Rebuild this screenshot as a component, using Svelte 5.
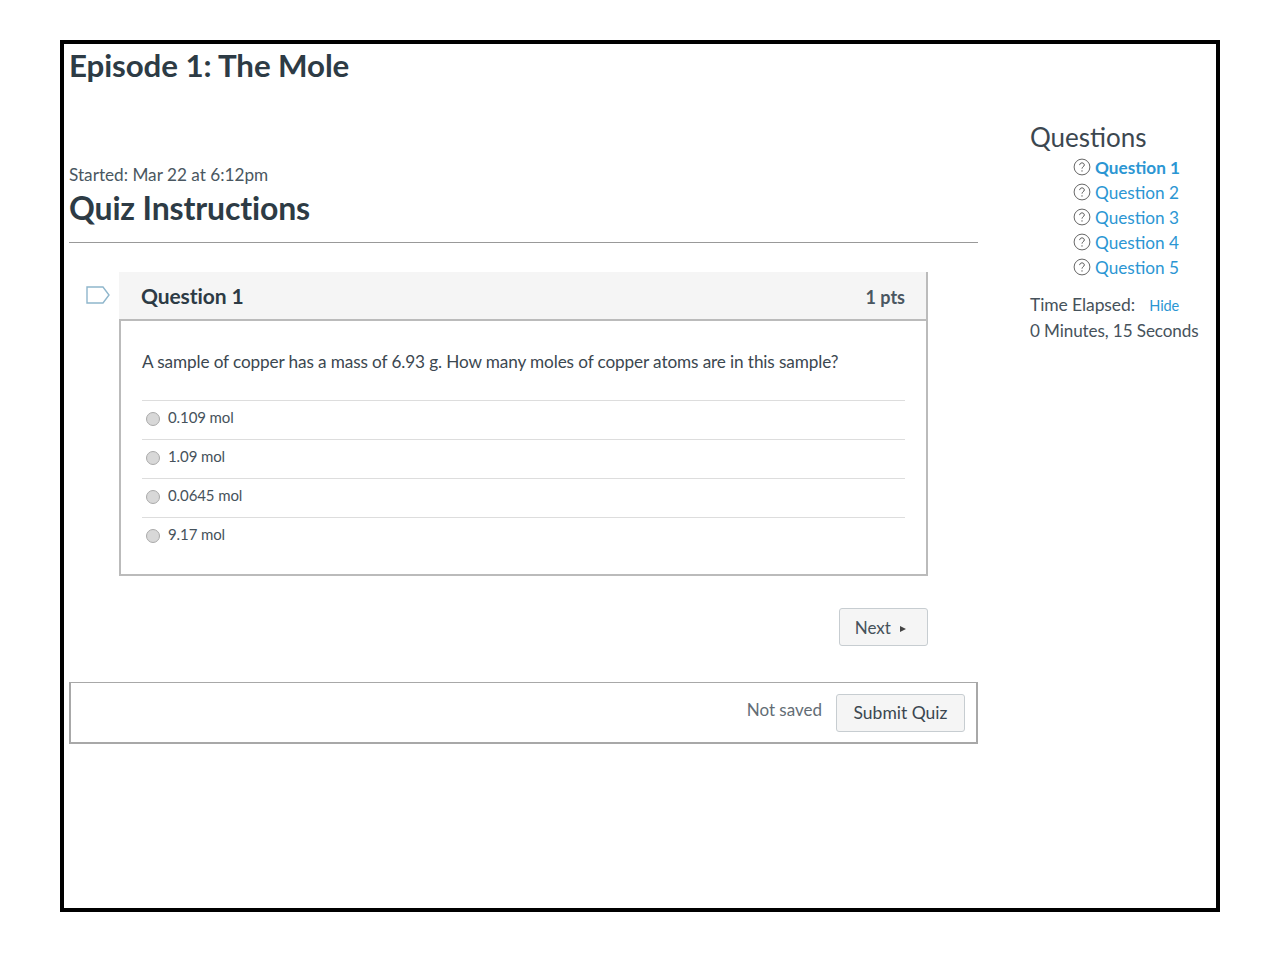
<script>
  const answers = ['0.109 mol', '1.09 mol', '0.0645 mol', '9.17 mol'];
  const questions = [1, 2, 3, 4, 5];
</script>

<div class="frame">
  <main class="main">
    <h1>Episode 1: The Mole</h1>
    <p class="started">Started: Mar 22 at 6:12pm</p>
    <h2>Quiz Instructions</h2>
    <hr />

    <div class="question-wrap">
      <svg class="flag" width="24" height="18" viewBox="0 0 24 18" fill="none">
        <path d="M1 1h16l6 8-6 8H1z" stroke="#8fb6cc" stroke-width="1.4" />
      </svg>
      <div class="question">
        <div class="q-head">
          <span class="q-title">Question 1</span>
          <span class="q-pts">1 pts</span>
        </div>
        <div class="q-body">
          <p class="q-text">A sample of copper has a mass of 6.93 g. How many moles of copper atoms are in this sample?</p>
          <ul class="answers">
            {#each answers as a}
              <li><span class="radio"></span><span>{a}</span></li>
            {/each}
          </ul>
        </div>
      </div>
    </div>

    <div class="next-row">
      <button class="btn next">Next <span class="arrow"></span></button>
    </div>

    <div class="submit-bar">
      <span class="saved">Not saved</span>
      <button class="btn submit">Submit Quiz</button>
    </div>
  </main>

  <aside class="side">
    <h3>Questions</h3>
    <ul class="q-list">
      {#each questions as n}
        <li>
          <svg width="18" height="18" viewBox="0 0 18 18" fill="none">
            <circle cx="9" cy="9" r="7.9" stroke="#555" stroke-width="0.9" />
            <path d="M6.7 7.1c0-1.4 1-2.2 2.3-2.2s2.3.8 2.3 2c0 1.9-2.3 1.9-2.3 3.7" stroke="#555" stroke-width="1" />
            <circle cx="9" cy="12.9" r="0.7" fill="#555" />
          </svg>
          <a href="#q{n}" class:current={n === 1}>Question {n}</a>
        </li>
      {/each}
    </ul>
    <div class="time">
      <div class="time-label">Time Elapsed: <a href="#hide">Hide</a></div>
      <div class="time-val">0 Minutes, 15 Seconds</div>
    </div>
  </aside>
</div>

<style>
  :global(body) {
    background: #fff;
  }
  .frame {
    box-sizing: border-box;
    width: 1160px;
    height: 872px;
    margin: 40px 0 0 60px;
    border: 4px solid #000;
    padding-left: 5px;
    display: flex;
    font-family: Lato, 'Open Sans', sans-serif;
    color: #2d3b45;
  }
  .main {
    width: 909px;
    flex: none;
  }
  h1 {
    margin: 0;
    padding-top: 1px;
    font-size: 31.3px;
    line-height: 41px;
    font-weight: 700;
    letter-spacing: -0.1px;
  }
  .started {
    margin: 76px 0 0;
    font-size: 17.2px;
    line-height: 26px;
    color: #4a5761;
  }
  h2 {
    margin: -1px 0 0;
    font-size: 32px;
    line-height: 41px;
    font-weight: 700;
    letter-spacing: -0.15px;
  }
  hr {
    margin: 14px 0 0;
    border: 0;
    height: 1px;
    background: #999;
  }
  .question-wrap {
    position: relative;
    margin: 29px 0 0 50px;
    width: 809px;
  }
  .flag {
    position: absolute;
    left: -33.5px;
    top: 14px;
  }
  .q-head {
    box-sizing: border-box;
    height: 49px;
    background: #f5f5f5;
    border-bottom: 2px solid #bbb;
    border-right: 2px solid #bbb;
    padding: 0 21px 0 22px;
    display: flex;
    justify-content: space-between;
    align-items: center;
  }
  .q-title {
    font-size: 21px;
    font-weight: 700;
    letter-spacing: -0.1px;
  }
  .q-pts {
    font-size: 18px;
    font-weight: 700;
    color: #4a5761;
    margin: 3px 0 0;
  }
  .q-body {
    box-sizing: border-box;
    height: 255px;
    border: 2px solid #bbb;
    border-top: 0;
    padding: 0 21px;
  }
  .q-text {
    margin: 0;
    padding-top: 29px;
    height: 79px;
    box-sizing: border-box;
    font-size: 17.2px;
    line-height: 24px;
    color: #3b4750;
    letter-spacing: -0.12px;
  }
  .answers {
    list-style: none;
    margin: 0;
    padding: 0;
  }
  .answers li {
    box-sizing: border-box;
    height: 39px;
    border-top: 1.5px solid #ddd;
    display: flex;
    align-items: center;
    padding: 0 0 6px 4px;
    font-size: 15px;
    color: #46525b;
    letter-spacing: -0.1px;
  }
  .radio {
    width: 12px;
    height: 12px;
    border-radius: 50%;
    background: #d8d8d8;
    border: 1px solid #aaa;
    margin: 3px 8px 0 0;
    flex: none;
  }
  .next-row {
    display: flex;
    justify-content: flex-end;
    width: 859px;
    margin-top: 32px;
  }
  .btn {
    font-family: inherit;
    background: #f5f5f5;
    border: 1px solid #c7cdd1;
    border-radius: 3px;
    color: #2d3b45;
    padding: 0;
  }
  .next {
    width: 89px;
    height: 38px;
    font-size: 17px;
    color: #46525b;
    padding-right: 6px;
  }
  .arrow {
    display: inline-block;
    margin: 0 0 2px 5px;
    border-left: 6px solid #444;
    border-top: 3.5px solid transparent;
    border-bottom: 3.5px solid transparent;
  }
  .submit-bar {
    box-sizing: border-box;
    height: 62px;
    margin-top: 36px;
    border: 2px solid #a8a8a8;
    border-top-width: 1.5px;
    display: flex;
    justify-content: flex-end;
    align-items: center;
    padding-right: 11px;
  }
  .saved {
    font-size: 17px;
    color: #636d75;
    margin: 0 14px 7px 0;
  }
  .submit {
    width: 129px;
    height: 38px;
    font-size: 17.5px;
    color: #3b4750;
  }
  .side {
    margin-left: 52px;
    width: 180px;
    flex: none;
    padding-top: 77px;
  }
  h3 {
    margin: 0;
    font-size: 26px;
    line-height: 32px;
    font-weight: 400;
    color: #3c4750;
  }
  .q-list {
    list-style: none;
    margin: 2px 0 0;
    padding: 0 0 0 43px;
  }
  .q-list li {
    height: 25px;
    display: flex;
    align-items: center;
    gap: 4px;
    font-size: 17.2px;
    white-space: nowrap;
  }
  .q-list svg {
    margin-bottom: 2px;
  }
  a {
    color: #2b96d3;
    text-decoration: none;
  }
  a.current {
    font-weight: 700;
  }
  .time {
    margin-top: 12px;
    font-size: 17.5px;
    line-height: 25px;
    color: #46525b;
    white-space: nowrap;
    letter-spacing: -0.1px;
  }
  .time-label a {
    font-size: 14.5px;
    margin-left: 10px;
  }
  .time-val {
    font-size: 17.1px;
  }
</style>
